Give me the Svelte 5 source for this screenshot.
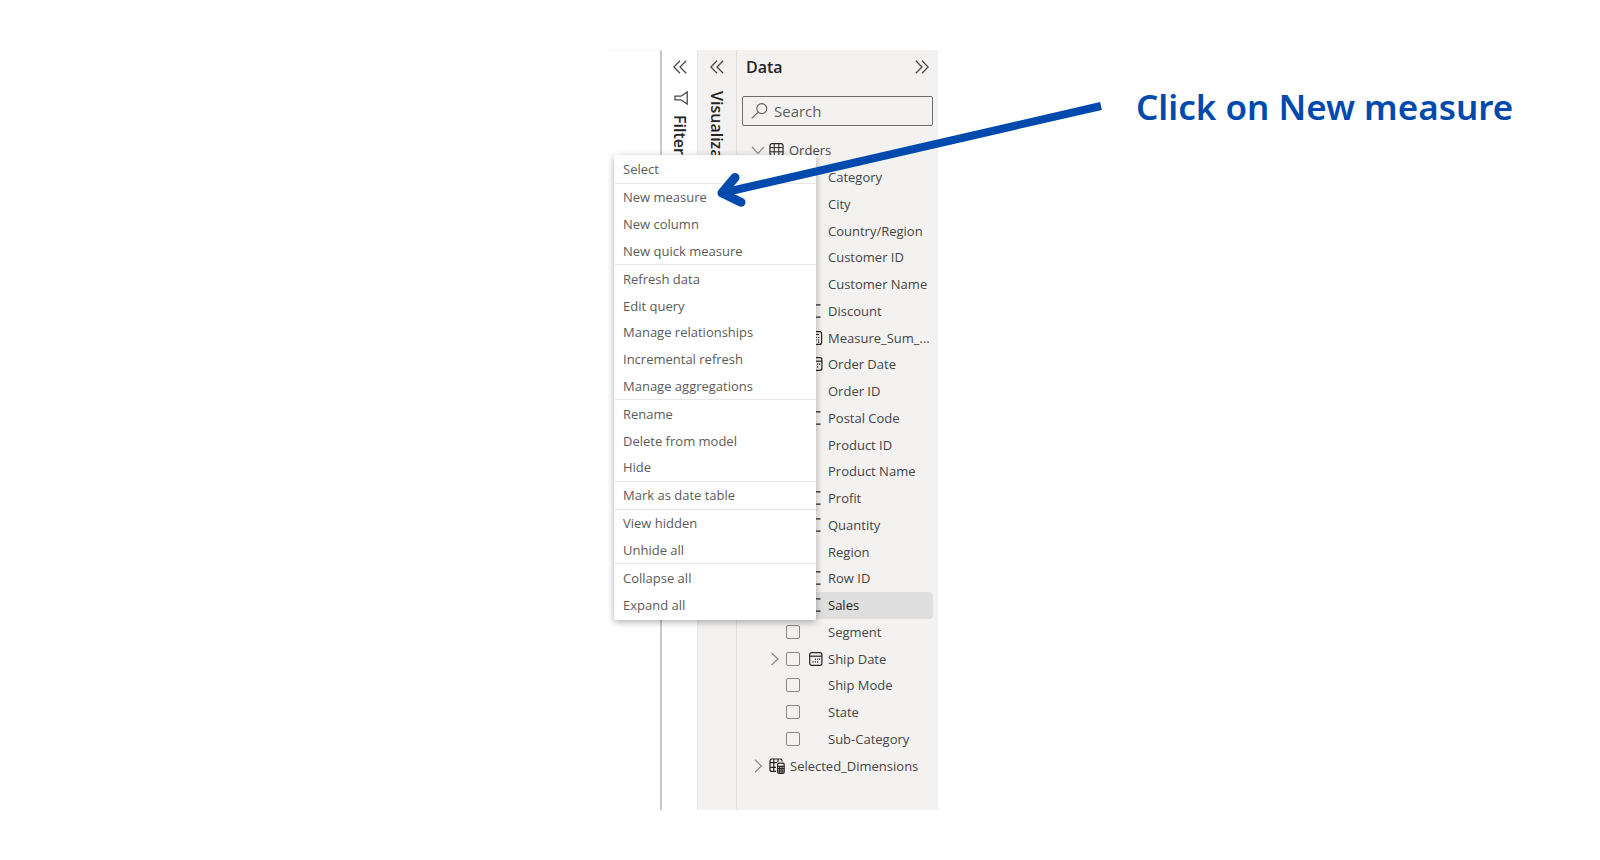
<script>
  const menu = [
    ['Select'],
    ['New measure', 'New column', 'New quick measure'],
    ['Refresh data', 'Edit query', 'Manage relationships', 'Incremental refresh', 'Manage aggregations'],
    ['Rename', 'Delete from model', 'Hide'],
    ['Mark as date table'],
    ['View hidden', 'Unhide all'],
    ['Collapse all', 'Expand all'],
  ];

  const fields = [
    { name: 'Category' },
    { name: 'City' },
    { name: 'Country/Region' },
    { name: 'Customer ID' },
    { name: 'Customer Name' },
    { name: 'Discount', icon: 'sum' },
    { name: 'Measure_Sum_...', icon: 'calc' },
    { name: 'Order Date', icon: 'date' },
    { name: 'Order ID' },
    { name: 'Postal Code', icon: 'sum' },
    { name: 'Product ID' },
    { name: 'Product Name' },
    { name: 'Profit', icon: 'sum' },
    { name: 'Quantity', icon: 'sum' },
    { name: 'Region' },
    { name: 'Row ID', icon: 'sum' },
    { name: 'Sales', icon: 'sum', selected: true },
    { name: 'Segment' },
    { name: 'Ship Date', icon: 'date' },
    { name: 'Ship Mode' },
    { name: 'State' },
    { name: 'Sub-Category' },
  ];
</script>

{#snippet doubleChevron(flip)}
  <svg width="14" height="14" viewBox="0 0 14 14" class="line" class:flip aria-hidden="true">
    <path d="M7 .7 .8 7 7 13.3M13.2 .7 7 7l6.2 6.3" />
  </svg>
{/snippet}

{#snippet fieldIcon(kind)}
  <svg width="14" height="14" viewBox="0 0 14 14" class="glyph" aria-hidden="true">
    {#if kind === 'sum'}
      <path d="M11.5 .8H1L5.5 7 1 13.2h10.5" />
    {:else if kind === 'calc'}
      <rect x="1" y=".6" width="11.6" height="12.8" rx="2" />
      <path d="M4 3.5h6M4 6.5h1.5M6.5 6.5h1.3M9 6.5h1.3M4 9h1.5M6.5 9h1.3M9 9h1.3M4 11.2h1.5M9 11.2h1.3" />
    {:else if kind === 'date'}
      <rect x=".7" y=".7" width="12.2" height="12.6" rx="2" />
      <path d="M.7 4.2h12.2" />
      <path d="M5.8 7.2h1.2M8 7.2h1.2M10 7.2h1.2M3.4 9.8h1.2M5.8 9.8h1.2M8 9.8h1.2" />
    {/if}
  </svg>
{/snippet}

<main>
  <section class="capture">
    <div class="canvas-edge"></div>

    <aside class="rail filters">
      <button class="bare" aria-label="Expand filters">{@render doubleChevron(false)}</button>
      <h2>
        <svg width="16" height="14" viewBox="0 0 16 14" class="line" aria-hidden="true">
          <path d="M15.2 .9v12.2L9 8.8H3V5.2h6z" />
        </svg>
        <span>Filters</span>
      </h2>
    </aside>

    <aside class="rail visuals">
      <button class="bare" aria-label="Expand visualizations">{@render doubleChevron(false)}</button>
      <h2><span>Visualizations</span></h2>
    </aside>

    <section class="data">
      <header>
        <h1>Data</h1>
        <button class="bare" aria-label="Collapse data">{@render doubleChevron(true)}</button>
      </header>

      <label class="search">
        <svg width="17" height="17" viewBox="0 0 17 17" class="lens" aria-hidden="true">
          <circle cx="10.8" cy="5.6" r="5" />
          <path d="M7.2 9.2 .8 15.4" />
        </svg>
        <input type="text" placeholder="Search" aria-label="Search" />
      </label>

      <ul class="tree">
        <li class="row table-row">
          <svg width="14" height="14" viewBox="0 0 14 14" class="chevron" aria-hidden="true"><path d="M1 4l6 6.3L13 4" /></svg>
          <svg width="15" height="14" viewBox="0 0 15 14" class="glyph" aria-hidden="true">
            <rect x="1" y=".6" width="13" height="12" rx="2" />
            <path d="M5.2 .6v12M9.8 .6v12M1 4.6h13M1 8.8h13" class="fine" />
          </svg>
          <span>Orders</span>
        </li>
        {#each fields as f}
          <li class="row field-row" class:selected={f.selected}>
            <svg width="12" height="14" viewBox="0 0 12 14" class="chevron" aria-hidden="true">
              {#if f.icon === 'date'}<path d="M2.5 1l6.5 6-6.5 6" />{/if}
            </svg>
            <input type="checkbox" aria-label={f.name} />
            {@render fieldIcon(f.icon)}
            <span>{f.name}</span>
          </li>
        {/each}
        <li class="row table-row">
          <svg width="14" height="14" viewBox="0 0 14 14" class="chevron" aria-hidden="true"><path d="M4 .8 10.5 7 4 13.2" /></svg>
          <svg width="16" height="16" viewBox="0 0 16 16" class="glyph" aria-hidden="true">
            <path d="M13 3.6V2.8A1.8 1.8 0 0 0 11.2 1H3a2 2 0 0 0-2 2v8.4a2 2 0 0 0 2 2h4M4.8 1v12.4M9 1v3.2M1 4.7h7M1 9.3h6" />
            <rect x="8.6" y="5.2" width="6.6" height="10.2" rx="1.4" />
            <path d="M8.6 8.3h6.6M10.7 8.3v7M13 8.3v7M8.6 10.7h6.6M8.6 13h6.6" />
          </svg>
          <span>Selected_Dimensions</span>
        </li>
      </ul>
    </section>

    <div class="menu" role="menu">
      {#each menu as group}
        <div class="group" style:flex-grow={group.length}>
          {#each group as item}
            <button role="menuitem">{item}</button>
          {/each}
        </div>
      {/each}
    </div>

    <svg class="arrow" width="400" height="120" viewBox="0 0 400 120" aria-hidden="true">
      <path d="M391 16 12 103" />
      <path d="M25 87.5 12 103l19 9.2" class="head" />
    </svg>
  </section>

  <p class="caption">Click on New measure</p>
</main>

<style>
  :global(body) {
    margin: 0;
    background: #fff;
  }

  main {
    box-sizing: border-box;
    min-height: 100vh;
    padding: 50px 0;
    display: grid;
    grid-template-columns: 37.875% 332px 1fr;
    font-family: 'Open Sans', 'Noto Sans', sans-serif;
    font-size: 13px;
    color: #454443;
  }

  .capture {
    grid-column: 2;
    position: relative;
    display: flex;
  }

  .canvas-edge {
    flex: 1;
    border-top: 1px solid #f8f8f8;
    border-right: 2px solid #c8c8c8;
  }

  .rail {
    box-sizing: border-box;
    display: flex;
    flex-direction: column;
    align-items: center;
    padding-top: 10px;
    gap: 17px;
  }

  .filters {
    width: 35px;
    background: #fff;
  }

  .visuals {
    width: 40px;
    background: #f3f2f1;
    border-left: 1px solid #e6e5e4;
    border-right: 1px solid #e1dfdd;
  }

  .rail h2 {
    margin: 0;
    display: flex;
    flex-direction: column;
    align-items: center;
    gap: 10px;
    font-size: 16px;
    line-height: 20px;
    font-weight: 600;
    color: #252423;
  }

  .rail h2 span {
    writing-mode: vertical-rl;
  }

  .bare {
    display: flex;
    padding: 0;
    border: 0;
    background: none;
  }

  svg {
    display: block;
    flex: none;
    fill: none;
  }

  .line {
    stroke: #4a4948;
    stroke-width: 1.3;
  }

  .flip {
    transform: scaleX(-1);
  }

  .glyph {
    stroke: #252423;
    stroke-width: 1.2;
  }

  .fine {
    stroke-width: 1;
  }

  .chevron {
    stroke: #8a8886;
    stroke-width: 1.2;
  }

  .lens {
    stroke: #605e5c;
    stroke-width: 1.1;
  }

  .data {
    box-sizing: border-box;
    width: 201px;
    padding: 6px 5px 31px;
    background: #f3f2f1;
    display: flex;
    flex-direction: column;
  }

  header {
    display: flex;
    align-items: center;
    justify-content: space-between;
    padding: 0 4px;
    height: 22px;
  }

  h1 {
    margin: 0;
    font-size: 16px;
    line-height: 22px;
    font-weight: 600;
    color: #252423;
  }

  .search {
    box-sizing: border-box;
    height: 30px;
    margin-top: 18px;
    padding: 0 8px;
    display: flex;
    align-items: center;
    gap: 6px;
    border: 1px solid #706e6c;
    border-radius: 2px;
  }

  .search input {
    flex: 1;
    min-width: 0;
    padding: 0;
    border: 0;
    outline: 0;
    background: none;
    font: inherit;
    font-size: 15px;
  }

  .search input::placeholder {
    color: #605e5c;
    opacity: 1;
  }

  .tree {
    flex: 1;
    margin: 11px 0 0;
    padding: 0;
    list-style: none;
    display: flex;
    flex-direction: column;
  }

  .row {
    flex: 1;
    display: flex;
    align-items: center;
    line-height: 20px;
    white-space: nowrap;
    border-radius: 4px;
  }

  .table-row {
    padding-left: 9px;
    gap: 4px;
  }

  .table-row span {
    margin-left: 1px;
  }

  .field-row {
    padding-left: 27px;
  }

  .selected {
    background: #dfdfdf;
    color: #252423;
  }

  .field-row input {
    appearance: none;
    box-sizing: border-box;
    width: 14px;
    height: 14px;
    margin: 0 9px 0 5px;
    border: 1px solid #8a8886;
    border-radius: 2px;
  }

  .field-row span {
    margin-left: 5px;
  }

  .menu {
    position: absolute;
    left: 8px;
    top: 105px;
    bottom: 190px;
    width: 202px;
    box-sizing: border-box;
    padding: 1px 0 2px;
    display: flex;
    flex-direction: column;
    background: #fff;
    border-radius: 2px;
    box-shadow: 0 2px 7px rgba(0, 0, 0, 0.32);
  }

  .group {
    flex-basis: 0;
    display: flex;
    flex-direction: column;
  }

  .group + .group {
    border-top: 1px solid #e8e8e8;
  }

  .menu button {
    flex: 1;
    padding: 0 9px;
    border: 0;
    background: none;
    font: inherit;
    line-height: 20px;
    text-align: left;
    color: #5c5b5a;
  }

  .arrow {
    position: absolute;
    left: 104px;
    top: 40px;
    stroke: #004aad;
    stroke-width: 8;
  }

  .head {
    stroke-width: 9;
    stroke-linecap: round;
    stroke-linejoin: round;
  }

  .caption {
    margin: 33px 0 0 198px;
    font-family: 'Noto Sans', 'Open Sans', sans-serif;
    font-size: 35px;
    line-height: 48px;
    font-weight: 600;
    white-space: nowrap;
    color: #004aad;
  }
</style>
